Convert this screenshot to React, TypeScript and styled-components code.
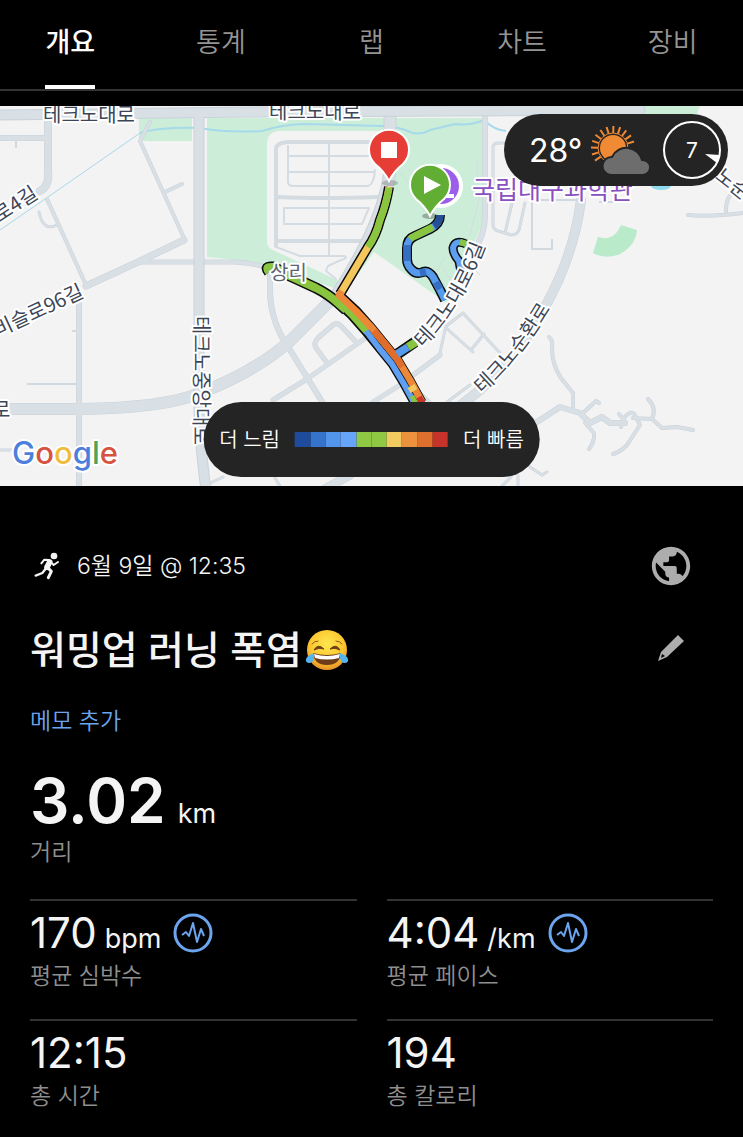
import React from 'react';
import styled, { createGlobalStyle, css } from 'styled-components';
import { MdPublic } from 'react-icons/md';

const GlobalStyle = createGlobalStyle`
  * { box-sizing: border-box; }
  body {
    margin: 0;
    background: #000;
    color: #f4f4f4;
    font-family: Inter, "Noto Sans CJK KR", sans-serif;
  }
  button { font: inherit; color: inherit; background: none; border: 0; padding: 0; cursor: pointer; }
`;

const Page = styled.main`
  width: 100%;
  overflow-x: hidden;
`;

const TabBar = styled.nav`
  border-bottom: 2px solid #343434;
  margin-bottom: 15px;
`;

const TabList = styled.div`
  display: grid;
  grid-template-columns: repeat(5, 1fr);
  justify-items: center;
  margin: 0 -5px;
`;

const Tab = styled.button<{ $active?: boolean }>`
  height: 89px;
  border-bottom: 4px solid ${(p) => (p.$active ? '#fff' : 'transparent')};
  color: ${(p) => (p.$active ? '#fff' : '#949494')};
  font-size: 27px;
  line-height: 32px;
  font-weight: ${(p) => (p.$active ? 500 : 350)};
`;

const MapPanel = styled.section`
  position: relative;
  height: 380px;
  background: #f4f3f4;
  overflow: hidden;
`;

const MapSvg = styled.svg`
  display: block;
  width: 100%;
  height: 100%;
`;

const overlay = css`
  position: absolute;
  display: flex;
  align-items: center;
  background: #242424;
  color: #fff;
`;

const Weather = styled.div`
  ${overlay}
  top: 8px;
  right: 15px;
  height: 72px;
  padding: 0 6px 0 25px;
  border-radius: 36px;
`;

const Temperature = styled.span`
  font-size: 32px;
  width: 62px;
`;

const Wind = styled.svg`
  width: 60px;
  height: 60px;
  margin-left: 11px;
`;

const Legend = styled.div`
  ${overlay}
  bottom: 9px;
  left: 50%;
  transform: translateX(-50%);
  gap: 15px;
  height: 75px;
  padding: 0 16px;
  border-radius: 38px;
  font-size: 20px;
  line-height: 28px;
  font-weight: 350;
  white-space: nowrap;
`;

const Scale = styled.div`
  display: grid;
  grid-template-columns: repeat(10, 1fr);
  width: 153px;
  height: 15px;
`;

const Swatch = styled.span<{ $color: string }>`
  background: ${(p) => p.$color};
`;

const Content = styled.section`
  padding: 56px 30px 20px;
`;

const Row = styled.div`
  display: flex;
  align-items: center;
  justify-content: space-between;
  padding-right: 18px;
`;

const DateLine = styled.p`
  display: flex;
  align-items: center;
  gap: 17px;
  margin: 0;
  padding-left: 4px;
  font-size: 23px;
  line-height: 30px;
  font-weight: 350;
`;

const IconButton = styled.button`
  display: grid;
  place-items: center;
  width: 48px;
  height: 48px;
  color: #adadad;
`;

const Title = styled.h1`
  display: flex;
  align-items: center;
  gap: 3px;
  margin: 30px 0 26px;
  font-size: 39px;
  line-height: 60px;
  font-weight: 500;
`;

const MemoLink = styled.a`
  display: block;
  width: fit-content;
  color: #6ca4ee;
  font-size: 23px;
  line-height: 30px;
  font-weight: 350;
  text-decoration: none;
`;

const Distance = styled.div`
  margin-top: 28px;
  margin-bottom: 32px;
`;

const Value = styled.div<{ $large?: boolean }>`
  display: flex;
  align-items: baseline;
  gap: ${(p) => (p.$large ? 12 : 8)}px;
  font-size: ${(p) => (p.$large ? 62 : 42)}px;
  line-height: ${(p) => (p.$large ? 73 : 56)}px;
  font-weight: ${(p) => (p.$large ? 600 : 400)};
`;

const Unit = styled.span`
  font-size: 27px;
  font-weight: 400;
  line-height: 32px;
`;

const Label = styled.div`
  color: #8f8f8f;
  font-size: 23px;
  line-height: 30px;
  font-weight: 350;
`;

const StatGrid = styled.div`
  display: grid;
  grid-template-columns: 1fr 1fr;
  column-gap: 30px;
  row-gap: 24px;
`;

const Stat = styled.div`
  height: 96px;
  padding-top: 4px;
  border-top: 2px solid #333;
`;

const PulseButton = styled.button`
  align-self: flex-start;
  width: 40px;
  height: 40px;
  margin-left: 4px;
  margin-top: 8px;
  line-height: 0;
`;

const road = { fill: 'none', stroke: '#d5dce1', strokeLinecap: 'round', strokeLinejoin: 'round' } as const;

const ROADS: { d: string; w: number }[] = [
  { w: 5, d: 'M0 138H47' },
  { w: 7, d: 'M48 117V170Q50 186 40 191' },
  { w: 1, d: 'M16 140V147M28 384H78M73 331H78' },
  { w: 3, d: 'M47 199L86 285M140 141L150 122M140 141L184 238M165 192L182 184' },
  { w: 2, d: 'M39 212Q43 232 57 225M0 450H18' },
  { w: 6, d: 'M86 286L138 262L184 240' },
  { w: 4, d: 'M138 262H235Q262 263 290 277' },
  { w: 5, d: 'M79 296V486' },
  { w: 11, d: 'M0 409H80Q165 408 200 393Q255 372 290 341L338 293' },
  { w: 5, d: 'M270 268V290Q270 322 290 350L326 408' },
  { w: 4, d: 'M273 400L307 379L367 337M327 363L316 348Q313 343 318 338L333 325Q337 322 341 326L356 342' },
  { w: 4, d: 'M373 402L400 385L440 355' },
  { w: 2, d: 'M440 353L445 330M463 313L500 353M463 313L445 327L473 352M471 350L484 334M410 383L430 402M447 402L470 385' },
  { w: 9, d: 'M581 200Q574 255 545 307Q520 355 480 390L460 406' },
  { w: 5, d: 'M485 117V215Q485 235 474 250' },
  { w: 2, d: 'M499 143H530M493 147Q493 143 499 143M493 147V222Q492 229 498 231L511 235Q517 235 519 230L525 203M512 203L505 233' },
  { w: 1, d: 'M532 200V249H552V240M540 200H575M600 202H613' },
  { w: 3, d: 'M688 215Q710 217 743 213M726 212Q725 198 735 190' },
  { w: 5, d: 'M520 433L560 407L580 413L590 423L602 417L610 423L625 423' },
  { w: 3, d: 'M549 337Q553 340 552 348Q552 365 561 378L573 393V410M583 413L596 401L599 403M585 423L594 433Q595 441 589 449M619 414L624 420L621 427M624 418Q632 408 636 417L640 425L627 445Q620 452 613 454M633 418L652 419L662 428L677 427L693 430M652 419Q657 408 648 399' },
  { w: 2, d: 'M530 467L542 475L547 472M518 475V486M502 486L511 477M275 478L280 486M210 483L223 477' },
  { w: 8, d: 'M325 489L350 475' },
];

const PARCELS: { d: string; w: number }[] = [
  { w: 4, d: 'M276 246V149Q276 143 288 142H376M278 197Q320 199 378 197M278 241H365' },
  { w: 2, d: 'M288 146V182Q288 186 294 186H368Q374 184 375 170M288 156H378M288 172H374M329 143V255M284 222V208H369L362 224H284M276 247L300 256H344Q349 258 341 260L328 266L326 271L336 279' },
];

const TRACK_WEST = 'M269 272Q264 266 273 267Q282 271 290 276L316 288Q328 294 338 303L346 310';
const TRACK_TRUNK = 'M340 300L354 313L369 330L382 346L395 362L407 382L419 404';
const TRACK_FINISH = 'M389 187Q386 205 380 220Q376 236 368 247L340 294';
const TRACK_START = 'M440 215Q440 224 430 229L415 236Q407 239 407 248V259Q407 265 411 269Q416 275 423 272Q428 270 433 277L440 290L445 300';
const TRACK_LOOP = 'M466 244Q455 239 453 248Q453 254 459 261L461 272';

const halo = { stroke: '#fff', strokeWidth: 4, strokeLinejoin: 'round', paintOrder: 'stroke', fill: '#3c4656' } as const;

function RouteMap() {
  return (
    <MapSvg viewBox="0 106 743 380" preserveAspectRatio="xMidYMid slice" role="img" aria-label="러닝 경로 지도">
      <g fill="#cceed8">
        <path d="M139 118H192V141H139ZM207 118H482V225L470 252L448 304L374 252L345 292Q300 276 275 268Q245 260 207 257Z" />
        <path d="M625 106H700L695 118H625Z" />
        <path fill="#b9eac9" d="M598 237Q614 242 621 225L637 230Q636 245 620 254Q606 260 593 253Z" />
      </g>
      <path fill="#f4f3f4" d="M280 131H388L380 200L345 285L333 278L273 250Q267 248 267 240V145Q267 131 280 131Z" />
      <path fill="none" stroke="#a6d9ea" strokeWidth="1" d="M0 230L48 197L140 133" />
      <path fill="none" stroke="#a6d9ea" strokeWidth="2" d="M140 133Q160 127 199 128Q228 133 262 131Q285 124 305 124L383 126Q400 127 410 132Q420 136 430 130L455 124Q470 126 484 120Q494 130 506 131" />
      <ellipse cx="661" cy="186" rx="10" ry="4" fill="#90daee" />
      <g {...road}>
        {PARCELS.map((r) => <path key={r.d} d={r.d} strokeWidth={r.w} />)}
        <path d="M461 256L480 275M451 262L466 280M443 268L456 288M434 276L444 258M480 195L470 235M477 160V190M400 172L412 188M408 168L418 184" strokeWidth="1" />
        {ROADS.map((r) => <path key={r.d} d={r.d} strokeWidth={r.w + 1} stroke="#c9d2d9" />)}
        {ROADS.map((r) => <path key={r.d} d={r.d} strokeWidth={r.w} stroke="#d9e0e5" />)}
        <path d="M390 115V170Q385 220 338 293" strokeWidth="13" stroke="#c9d2d9" />
        <path d="M390 115V170Q385 220 338 293" strokeWidth="11" stroke="#d9e0e5" />
        <path d="M199 115V390Q198 430 206 490" strokeWidth="11" stroke="#c9d2d9" />
        <path d="M0 115L250 112L640 110" strokeWidth="11" stroke="#c9d2d9" />
        <path d="M199 115V390Q198 430 206 490M0 115L250 112L640 110" strokeWidth="9" stroke="#d9e0e5" />
      </g>

      <g fill="none" strokeLinejoin="round">
        <g stroke="#0c0c0c">
          <path d={TRACK_WEST} strokeWidth="11" />
          <path d={TRACK_TRUNK} strokeWidth="16" />
          <path d={TRACK_FINISH} strokeWidth="10" />
          <path d={TRACK_START} strokeWidth="10" />
          <path d={TRACK_LOOP} strokeWidth="9" />
          <path d="M396 355L415 342" strokeWidth="11" />
        </g>
        <path d="M336 299L352 315L367 332" stroke="#89c53f" strokeWidth="7" />
        <path d={TRACK_WEST} stroke="#89c53f" strokeWidth="8" />
        <path d="M366 331L379 348L392 364L404 384L416 406" stroke="#5f9ff2" strokeWidth="6" />
        <path d={TRACK_FINISH} stroke="#f3c75b" strokeWidth="7" />
        <path d="M389 188Q386 205 380 220Q376 236 368 247" stroke="#89c53f" strokeWidth="7" />
        <path d="M342 291L339 295L356 311L372 328L385 344L398 360L410 380L422 402" stroke="#ee8839" strokeWidth="7" />
        <path d="M374 331L385 344L398 360L402 367" stroke="#df6d2c" strokeWidth="7" />
        <path d="M411 386L414 391" stroke="#f3c75b" strokeWidth="8" />
        <path d="M412 396L416 404" stroke="#89c53f" strokeWidth="5" />
        <path d="M419 397L423 404" stroke="#c9362b" strokeWidth="6" />
        <path d={TRACK_START} stroke="#559aed" strokeWidth="7" />
        <path d="M440 215Q440 222 434 226" stroke="#264f95" strokeWidth="7" />
        <path d="M433 227L415 236Q412 237 410 239" stroke="#89c53f" strokeWidth="7" />
        <path d="M407 245V261M420 273L426 272M436 282L440 289" stroke="#346fc4" strokeWidth="7" />
        <path d={TRACK_LOOP} stroke="#5f9ff2" strokeWidth="6" />
        <path d="M467 244L460 242" stroke="#89c53f" strokeWidth="6" />
        <path d="M397 354L408 347" stroke="#559aed" strokeWidth="8" />
        <path d="M408 347L416 342" stroke="#89c53f" strokeWidth="8" />
      </g>

      <g fontFamily='"Noto Sans CJK KR", sans-serif' fontSize="20" {...halo}>
        <text x="43" y="122">테크노대로</text>
        <text x="269" y="119">테크노대로</text>
        <text x="270" y="280" fill="#5b6472">상리</text>
        <text transform="translate(-1 223) rotate(-33)">로4길</text>
        <text transform="translate(-2 337) rotate(-25)">비슬로96길</text>
        <text transform="translate(194 316) rotate(90)">테크노중앙대로</text>
        <text x="-8" y="417">로</text>
        <path id="street-6" d="M423 348Q464 308 488 238" fill="none" stroke="none" />
        <text><textPath href="#street-6">테크노대로6길</textPath></text>
        <path id="street-loop" d="M482 394Q518 363 552 306" fill="none" stroke="none" />
        <text><textPath href="#street-loop">테크노순환로</textPath></text>
        <text transform="translate(714 178) rotate(38)">노순환로</text>
        <text x="472" y="199" fontSize="25" fill="#8a4fc0">국립대구과학관</text>
      </g>

      <circle cx="441" cy="186" r="22" fill="#fff" />
      <circle cx="441" cy="186" r="18" fill="#9c5de8" />
      <path d="M446 194H454V198H446Z" fill="#fff" />
      <ellipse cx="390" cy="183" rx="8" ry="3" fill="#555" opacity=".3" />
      <ellipse cx="430" cy="216" rx="8" ry="3" fill="#333" opacity=".35" />
      <path d="M430 216Q425 206 416 199A20 20 0 1 1 444 199Q435 206 430 216Z" fill="#62ad33" stroke="#fff" strokeWidth="2" />
      <path d="M424 176L441 185L424 194Z" fill="#fff" />
      <path d="M389 181Q384 171 375 164A20 20 0 1 1 403 164Q394 171 389 181Z" fill="#e63e36" stroke="#fff" strokeWidth="2" />
      <rect x="381" y="142" width="16" height="16" fill="#fff" />

      <text x="12" y="464" fontFamily="Inter, sans-serif" fontSize="31" fontWeight="500" stroke="#fff" strokeWidth="4" strokeLinejoin="round" paintOrder="stroke">
        <tspan fill="#4c7fdc">G</tspan><tspan fill="#d5533f">o</tspan><tspan fill="#efbc3e">o</tspan>
        <tspan fill="#4c7fdc">g</tspan><tspan fill="#4aa459">l</tspan><tspan fill="#d5533f">e</tspan>
      </text>
    </MapSvg>
  );
}

const SUN_RAYS = [-215, -197, -179, -161, -143, -125, -107, -89, -71, -53, -35, -17];

function SunCloud() {
  return (
    <svg width="60" height="52" viewBox="0 0 60 52" aria-label="구름 조금" role="img">
      <g transform="translate(22 24)">
        <circle r="13" fill="#f08a35" />
        <circle r="15" fill="none" stroke="#f08a35" strokeWidth="1" />
        {SUN_RAYS.map((a) => (
          <path key={a} d="M15 0H22" stroke="#f08a35" strokeWidth="2" transform={`rotate(${a})`} />
        ))}
      </g>
      <path d="M20 51A9 9 0 0 1 21 33A16 16 0 0 1 51 36A7 7 0 0 1 52 51Z" fill="#6d6d6d" stroke="#242424" strokeWidth="2" />
    </svg>
  );
}

function Runner() {
  return (
    <svg width="26" height="28" viewBox="0 0 78 84" fill="none" stroke="#f4f4f4" strokeLinecap="round" strokeLinejoin="round" aria-hidden="true">
      <circle cx="60" cy="12" r="10" fill="#f4f4f4" stroke="none" />
      <path d="M47 30L39 46" strokeWidth="17" />
      <path d="M46 24L31 23L22 34M52 32L59 39L72 30" strokeWidth="6" />
      <path d="M41 47L52 58L43 77" strokeWidth="9" />
      <path d="M35 50L25 63L5 71" strokeWidth="7" />
    </svg>
  );
}

function Joy() {
  return (
    <svg width="44" height="44" viewBox="0 0 44 44" role="img" aria-label="기쁨의 눈물">
      <defs>
        <radialGradient id="face" cx=".5" cy=".35" r=".65">
          <stop offset="0" stopColor="#ffe64f" />
          <stop offset=".65" stopColor="#fcc62f" />
          <stop offset="1" stopColor="#e8922a" />
        </radialGradient>
      </defs>
      <circle cx="22" cy="22" r="20" fill="url(#face)" />
      <path d="M7 16Q9 13 13 13M37 16Q35 13 31 13" fill="none" stroke="#8a5a17" strokeWidth="1" strokeLinecap="round" />
      <path d="M9 22Q13 15 19 21Q14 19 9 22ZM35 22Q31 15 25 21Q30 19 35 22Z" fill="#6b3f12" stroke="#6b3f12" strokeWidth="1" />
      <path d="M8 25Q22 29 36 25Q35 37 22 37Q9 37 8 25Z" fill="#6e3c18" />
      <path d="M9 26Q22 30 35 26L34 30Q22 33 10 30Z" fill="#fff" />
      <path d="M9 25Q10 35 4 35Q-1 34 2 29Q4 27 9 25ZM35 25Q34 35 40 35Q45 34 42 29Q40 27 35 25Z" fill="#55b3ee" />
    </svg>
  );
}

function Pencil() {
  return (
    <svg width="26" height="26" viewBox="0 0 26 26" aria-hidden="true">
      <path fill="currentColor" fillRule="evenodd" d="M20 0L26 6L9 22L0 26L3 17ZM4 19L3 23L7 21Z" />
    </svg>
  );
}

function Pulse() {
  return (
    <svg width="40" height="40" viewBox="0 0 40 40" fill="none" stroke="#6ca4ee" aria-hidden="true">
      <circle cx="20" cy="20" r="18" strokeWidth="3" />
      <path d="M9 22L13 19L16 23L20 10L24 29L28 16L31 23" strokeWidth="2" strokeLinejoin="round" />
    </svg>
  );
}

const TABS = ['개요', '통계', '랩', '차트', '장비'];
const PACE_COLORS = ['#1e4b9c', '#3674cb', '#5394ec', '#66a5f8', '#8fc943', '#8fc943', '#f2cb60', '#ec913e', '#de6f2c', '#c5332a'];
const STATS = [
  { value: '170', unit: 'bpm', label: '평균 심박수', pulse: true },
  { value: '4:04', unit: '/km', label: '평균 페이스', pulse: true },
  { value: '12:15', label: '총 시간' },
  { value: '194', label: '총 칼로리' },
];

export default function App() {
  return (
    <Page>
      <GlobalStyle />
      <TabBar>
        <TabList role="tablist">
          {TABS.map((t, i) => (
            <Tab key={t} role="tab" aria-selected={i === 0} $active={i === 0}>{t}</Tab>
          ))}
        </TabList>
      </TabBar>

      <MapPanel>
        <RouteMap />
        <Weather>
          <Temperature>28°</Temperature>
          <SunCloud />
          <Wind viewBox="0 0 60 60">
            <circle cx="30" cy="30" r="28" fill="none" stroke="#fff" strokeWidth="2" />
            <path d="M43 34L58 35L55 43Z" fill="#fff" />
            <text x="30" y="38" textAnchor="middle" fontSize="21" fill="#fff">7</text>
          </Wind>
        </Weather>
        <Legend>
          <span>더 느림</span>
          <Scale>
            {PACE_COLORS.map((c, i) => <Swatch key={i} $color={c} />)}
          </Scale>
          <span>더 빠름</span>
        </Legend>
      </MapPanel>

      <Content>
        <Row>
          <DateLine><Runner />6월 9일 @ 12:35</DateLine>
          <IconButton aria-label="공개 범위"><MdPublic size={46} /></IconButton>
        </Row>
        <Row>
          <Title>워밍업 러닝 폭염<Joy /></Title>
          <IconButton aria-label="제목 편집"><Pencil /></IconButton>
        </Row>
        <MemoLink href="#memo">메모 추가</MemoLink>
        <Distance>
          <Value $large>3.02<Unit>km</Unit></Value>
          <Label>거리</Label>
        </Distance>
        <StatGrid>
          {STATS.map((s) => (
            <Stat key={s.label}>
              <Value>
                {s.value}
                {s.unit && <Unit>{s.unit}</Unit>}
                {s.pulse && <PulseButton aria-label={`${s.label} 그래프`}><Pulse /></PulseButton>}
              </Value>
              <Label>{s.label}</Label>
            </Stat>
          ))}
        </StatGrid>
      </Content>
    </Page>
  );
}
